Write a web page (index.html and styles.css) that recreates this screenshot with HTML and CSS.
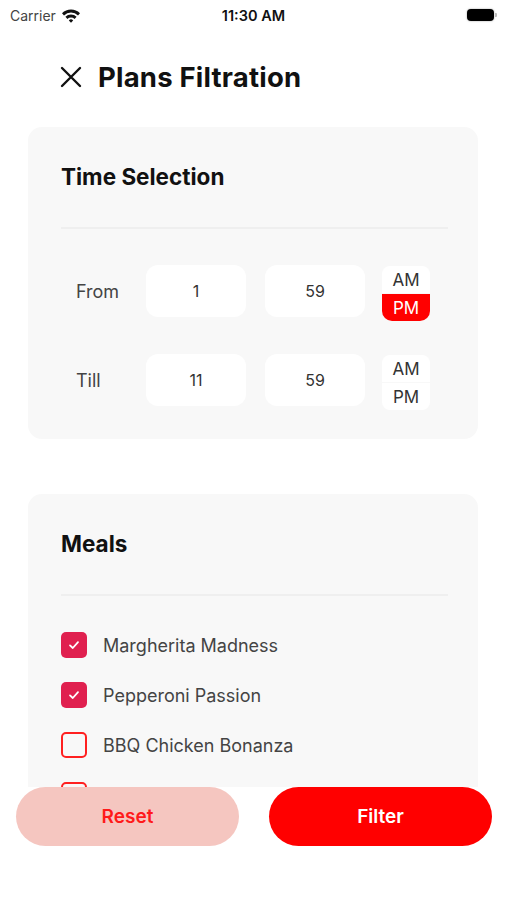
FILE: index.html
```html
<!DOCTYPE html>
<html lang="en">
<head>
    <meta charset="UTF-8">
    <meta name="viewport" content="width=device-width, initial-scale=1.0">
    <title>Plans Filtration</title>
    <link rel="stylesheet" href="styles.css">
</head>
<body>
    <div class="screen">
        <div class="status-bar">
            <div class="carrier">
                Carrier
                <svg class="wifi" width="20" height="15" viewBox="0 0 20 15">
                    <path d="M1 5.2 A13 13 0 0 1 19 5.2 L17 7.4 A10 10 0 0 0 3 7.4 Z" fill="#111"/>
                    <path d="M4.4 8.8 A8.2 8.2 0 0 1 15.6 8.8 L13.6 11 A5.3 5.3 0 0 0 6.4 11 Z" fill="#111"/>
                    <path d="M7.8 12.4 A3.2 3.2 0 0 1 12.2 12.4 L10 14.8 Z" fill="#111"/>
                </svg>
            </div>
            <div class="clock">11:30 AM</div>
            <div class="battery">
                <span class="battery-body"></span>
                <span class="battery-nub"></span>
            </div>
        </div>

        <header class="header">
            <svg class="close-icon" width="22" height="22" viewBox="0 0 22 22">
                <path d="M2 2 L20 20 M20 2 L2 20" stroke="#111" stroke-width="2.4" stroke-linecap="round"/>
            </svg>
            <h1>Plans Filtration</h1>
        </header>

        <main class="scroll">
            <section class="card">
                <h2>Time Selection</h2>
                <div class="divider"></div>

                <div class="time-row">
                    <span class="time-label">From</span>
                    <div class="time-box">1</div>
                    <div class="time-box">59</div>
                    <div class="ampm">
                        <span class="ampm-opt">AM</span>
                        <span class="ampm-opt selected">PM</span>
                    </div>
                </div>

                <div class="time-row">
                    <span class="time-label">Till</span>
                    <div class="time-box">11</div>
                    <div class="time-box">59</div>
                    <div class="ampm">
                        <span class="ampm-opt">AM</span>
                        <span class="ampm-opt">PM</span>
                    </div>
                </div>
            </section>

            <section class="card meals">
                <h2>Meals</h2>
                <div class="divider"></div>

                <ul class="meal-list">
                    <li class="meal">
                        <span class="check checked">
                            <svg width="14" height="14" viewBox="0 0 14 14"><path d="M3 7.4 L5.8 10 L11 4.2" fill="none" stroke="#fff" stroke-width="1.8" stroke-linecap="round" stroke-linejoin="round"/></svg>
                        </span>
                        Margherita Madness
                    </li>
                    <li class="meal">
                        <span class="check checked">
                            <svg width="14" height="14" viewBox="0 0 14 14"><path d="M3 7.4 L5.8 10 L11 4.2" fill="none" stroke="#fff" stroke-width="1.8" stroke-linecap="round" stroke-linejoin="round"/></svg>
                        </span>
                        Pepperoni Passion
                    </li>
                    <li class="meal">
                        <span class="check"></span>
                        BBQ Chicken Bonanza
                    </li>
                    <li class="meal">
                        <span class="check"></span>
                    </li>
                </ul>
            </section>
        </main>

        <footer class="actions">
            <button class="btn btn-reset">Reset</button>
            <button class="btn btn-filter">Filter</button>
        </footer>
    </div>
</body>
</html>
```

FILE: styles.css
```css
/* Plans filtration screen */
body {
    margin: 0;
    padding: 0;
    background-color: #fff;
    font-family: Inter, "Noto Sans", sans-serif;
    color: #111;
}
.screen {
    width: 506px;
    height: 900px;
    display: flex;
    flex-direction: column;
    overflow: hidden;
}
.status-bar {
    height: 30px;
    display: flex;
    align-items: center;
    justify-content: space-between;
    padding: 0 9px 0 10px;
    box-sizing: border-box;
}
.carrier {
    width: 120px;
    display: flex;
    align-items: center;
    gap: 5px;
    font-size: 14px;
    color: #444;
}
.clock {
    font-size: 14.5px;
    font-weight: 600;
    color: #111;
}
.battery {
    width: 120px;
    display: flex;
    justify-content: flex-end;
    align-items: center;
}
.battery-body {
    width: 27px;
    height: 12px;
    border-radius: 4px;
    background-color: #000;
    box-shadow: 0 0 2px rgba(0, 0, 0, 0.4);
}
.battery-nub {
    width: 2px;
    height: 4px;
    margin-left: 1px;
    border-radius: 0 1px 1px 0;
    background-color: #bbb;
}
.header {
    display: flex;
    align-items: center;
    gap: 16px;
    height: 34px;
    padding: 30px 0 0 60px;
}
.header h1 {
    margin: 0;
    font-size: 27.5px;
    font-weight: 700;
    letter-spacing: 0.2px;
}
.scroll {
    flex: 1;
    overflow: hidden;
    padding-top: 33px;
}
.card {
    margin: 0 28px 55px;
    padding: 36px 30px 33px 33px;
    background-color: #f8f8f8;
    border-radius: 14px;
}
.card h2 {
    margin: 0;
    font-size: 22.5px;
    font-weight: 700;
    line-height: 28px;
}
.divider {
    height: 2px;
    margin: 36px 0 36px;
    background-color: #efefef;
}
.time-row {
    display: flex;
    align-items: center;
    height: 52px;
    padding-left: 15px;
    margin-bottom: 37px;
}
.time-row:last-child {
    margin-bottom: 0;
}
.time-label {
    width: 70px;
    font-size: 18px;
    color: #444;
}
.time-box {
    width: 100px;
    height: 52px;
    margin-right: 19px;
    display: flex;
    align-items: center;
    justify-content: center;
    background-color: #fff;
    border-radius: 12px;
    font-size: 16px;
    color: #333;
}
.time-box + .time-box {
    margin-right: 17px;
}
.ampm {
    width: 48px;
    margin-top: 5px;
    display: flex;
    flex-direction: column;
}
.ampm-opt {
    height: 27px;
    display: flex;
    align-items: center;
    justify-content: center;
    background-color: #fff;
    font-size: 17px;
    color: #333;
}
.ampm-opt:first-child {
    border-radius: 8px 8px 0 0;
    margin-bottom: 1px;
}
.ampm-opt:last-child {
    border-radius: 0 0 8px 8px;
}
.ampm-opt.selected {
    background-color: #ff0000;
    color: #fff;
    border-radius: 0 0 10px 10px;
}
.meal-list {
    list-style-type: none;
    margin: 0;
    padding: 0;
}
.meal {
    display: flex;
    align-items: center;
    gap: 16px;
    height: 26px;
    margin-bottom: 24px;
    font-size: 18px;
    color: #444;
}
.check {
    width: 26px;
    height: 26px;
    box-sizing: border-box;
    border: 2px solid #ff2020;
    border-radius: 5px;
    display: flex;
    align-items: center;
    justify-content: center;
}
.check.checked {
    border: none;
    background-color: #e0204f;
}
.actions {
    display: flex;
    justify-content: space-between;
    padding: 0 14px 54px 16px;
}
.btn {
    width: 223px;
    height: 59px;
    border: none;
    border-radius: 30px;
    font-family: Inter, "Noto Sans", sans-serif;
    font-size: 19px;
    font-weight: 600;
}
.btn-reset {
    background-color: #f5c6c0;
    color: #ff1a1a;
}
.btn-filter {
    background-color: #ff0000;
    color: #fff;
}
```
